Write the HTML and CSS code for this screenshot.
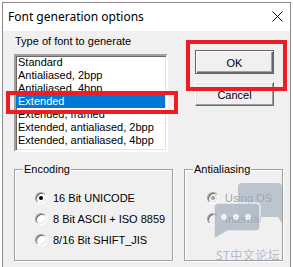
FILE: index.html
```html
<!DOCTYPE html>
<html>
<head>
<meta charset="utf-8">
<link rel="stylesheet" href="styles.css">
</head>
<body>
<div class="window">
  <div class="titlebar">
    <span class="title">Font generation options</span>
    <svg class="close" width="11" height="11" viewBox="0 0 11 11"><path d="M0.5 0.5 L10.5 10.5 M10.5 0.5 L0.5 10.5" stroke="#111" stroke-width="1"/></svg>
  </div>
  <div class="client">
    <div class="top">
      <div class="left">
        <div class="label">Type of font to generate</div>
        <div class="listbox">
          <div class="item">Standard</div>
          <div class="item">Antialiased, 2bpp</div>
          <div class="item">Antialiased, 4bpp</div>
          <div class="item sel">Extended</div>
          <div class="item">Extended, framed</div>
          <div class="item">Extended, antialiased, 2bpp</div>
          <div class="item">Extended, antialiased, 4bpp</div>
        </div>
      </div>
      <div class="buttons">
        <div class="btn default"><span>OK</span></div>
        <div class="btn"><span>Cancel</span></div>
      </div>
    </div>
    <div class="groups">
      <fieldset class="group enc">
        <legend>Encoding</legend>
        <div class="radio"><span class="dot checked"></span><span>16 Bit UNICODE</span></div>
        <div class="radio"><span class="dot"></span><span>8 Bit ASCII + ISO 8859</span></div>
        <div class="radio"><span class="dot"></span><span>8/16 Bit SHIFT_JIS</span></div>
      </fieldset>
      <fieldset class="group aa">
        <legend>Antialiasing</legend>
        <div class="radio disabled"><span class="dot checked"></span><span>Using OS</span></div>
        <div class="radio disabled"><span class="dot"></span><span>Internal</span></div>
      </fieldset>
    </div>
  </div>
</div>
<div class="mark mark-list"></div>
<div class="mark mark-ok"></div>
<div class="watermark">
  <svg class="wm-icon" width="72" height="58" viewBox="0 0 72 58">
    <path d="M30 2 H66 Q70 2 70 6 V40 L70 42 L66 36 H30 Q26 36 26 32 V6 Q26 2 30 2 Z" fill="#9aa7b8" fill-opacity="0.85"/>
    <path d="M6 22 H44 Q48 22 48 26 V46 Q48 50 44 50 H16 L2 58 L2 26 Q2 22 6 22 Z" fill="#9aa7b8" fill-opacity="0.9" stroke="#f0f0f0" stroke-width="1.5"/>
    <circle cx="12" cy="36" r="3" fill="#f4f4f4"/>
    <circle cx="24" cy="36" r="3" fill="#f4f4f4"/>
    <circle cx="36" cy="36" r="3" fill="#f4f4f4"/>
  </svg>
  <div class="wm-text">ST中文论坛</div>
</div>
</body>
</html>
```
FILE: styles.css
```css
html, body {
  margin: 0;
  padding: 0;
  background: #ffffff;
  overflow: hidden;
}
body {
  width: 293px;
  height: 267px;
  position: relative;
  font-family: "Liberation Sans", Arial, sans-serif;
  font-size: 11px;
  color: #000;
}
.window {
  margin: 2px 0 0 2px;
  width: 287px;
  height: 270px;
  border: 1px solid #8c8c8c;
  border-bottom: none;
  background: #f0f0f0;
  display: flex;
  flex-direction: column;
}
.titlebar {
  height: 28px;
  background: #ffffff;
  display: flex;
  align-items: center;
  justify-content: space-between;
  padding: 0 7px 0 5px;
}
.title {
  font-family: "Noto Sans", "Open Sans", sans-serif;
  font-size: 12px;
  color: #000;
  margin-top: -1px;
}
.close {
  display: block;
  margin-top: -1px;
}
.client {
  flex: 1;
  background: #f0f0f0;
  padding: 4px 0 0 11px;
}
.top {
  display: flex;
  align-items: flex-start;
}
.label {
  line-height: 13px;
  margin-left: 1px;
  margin-bottom: 6px;
}
.listbox {
  width: 150px;
  height: 94px;
  border-style: solid;
  border-width: 2px;
  border-color: #a0a0a0 #ffffff #ffffff #a0a0a0;
  box-shadow: inset 1px 1px 0 #696969, inset -1px -1px 0 #e3e3e3;
  background: #fff;
  padding: 0;
}
.item {
  height: 13px;
  line-height: 13px;
  padding-left: 2px;
  margin: 0 1px 0 0;
  white-space: nowrap;
}
.item.sel {
  background: #0078d7;
  color: #fff;
}
.buttons {
  margin-left: 27px;
  margin-top: 15px;
  display: flex;
  flex-direction: column;
  gap: 8px;
}
.btn {
  width: 79px;
  height: 24px;
  box-sizing: border-box;
  display: flex;
  align-items: center;
  justify-content: center;
  background: #f0f0f0;
  border-style: solid;
  border-width: 1px;
  border-color: #ffffff #696969 #696969 #ffffff;
  box-shadow: inset -1px -1px 0 #a0a0a0, inset 1px 1px 0 #e3e3e3;
}
.btn span {
  margin-top: 1px;
}
.btn.default {
  border: 1px solid #646464;
  box-shadow: inset 1px 1px 0 #ffffff, inset -1px -1px 0 #696969, inset -2px -2px 0 #a0a0a0;
}
.groups {
  display: flex;
  gap: 11px;
  margin-top: 11px;
}
.group {
  margin: 0;
  box-sizing: border-box;
  height: 98px;
  border: 1px solid #a0a0a0;
  box-shadow: inset 1px 1px 0 #ffffff, 1px 1px 0 #ffffff;
  padding: 15px 0 0 8px;
  display: flex;
  flex-direction: column;
  gap: 7px;
}
.group legend {
  padding: 0 1px;
  margin-left: 0;
  line-height: 13px;
}
.enc { width: 159px; }
.enc .radio { margin-left: 12px; }
.aa { width: 99px; }
.aa .radio { margin-left: 14px; }
.radio {
  display: flex;
  align-items: center;
  height: 14px;
  white-space: nowrap;
}
.dot {
  width: 12px;
  height: 12px;
  box-sizing: border-box;
  border-radius: 50%;
  border: 1px solid;
  border-color: #a0a0a0 #ffffff #ffffff #a0a0a0;
  box-shadow: inset 1px 1px 0 #696969, inset -1px -1px 0 #e3e3e3;
  background: #fff;
  margin-right: 6px;
  position: relative;
  flex: none;
}
.dot.checked::after {
  content: "";
  position: absolute;
  left: 3px;
  top: 3px;
  width: 4px;
  height: 4px;
  border-radius: 50%;
  background: #000;
}
.radio.disabled {
  color: #a0a0a0;
  text-shadow: 1px 1px 0 #ffffff;
}
.radio.disabled .dot {
  background: #f0f0f0;
}
.radio.disabled .dot.checked::after {
  background: #a0a0a0;
}
.mark {
  position: absolute;
  border: 4px solid #ee1c24;
  box-sizing: border-box;
}
.mark-list {
  left: 6px;
  top: 91px;
  width: 172px;
  height: 23px;
}
.mark-ok {
  left: 186px;
  top: 40px;
  width: 101px;
  height: 51px;
}
.watermark {
  position: absolute;
  left: 212px;
  top: 181px;
  width: 76px;
  opacity: 0.7;
}
.wm-icon {
  display: block;
}
.wm-text {
  margin-top: 10px;
  margin-left: 4px;
  font-family: "Noto Sans", "Noto Sans CJK SC", sans-serif;
  font-size: 12px;
  line-height: 13px;
  color: #9aa8ba;
  letter-spacing: 0.5px;
}
```
